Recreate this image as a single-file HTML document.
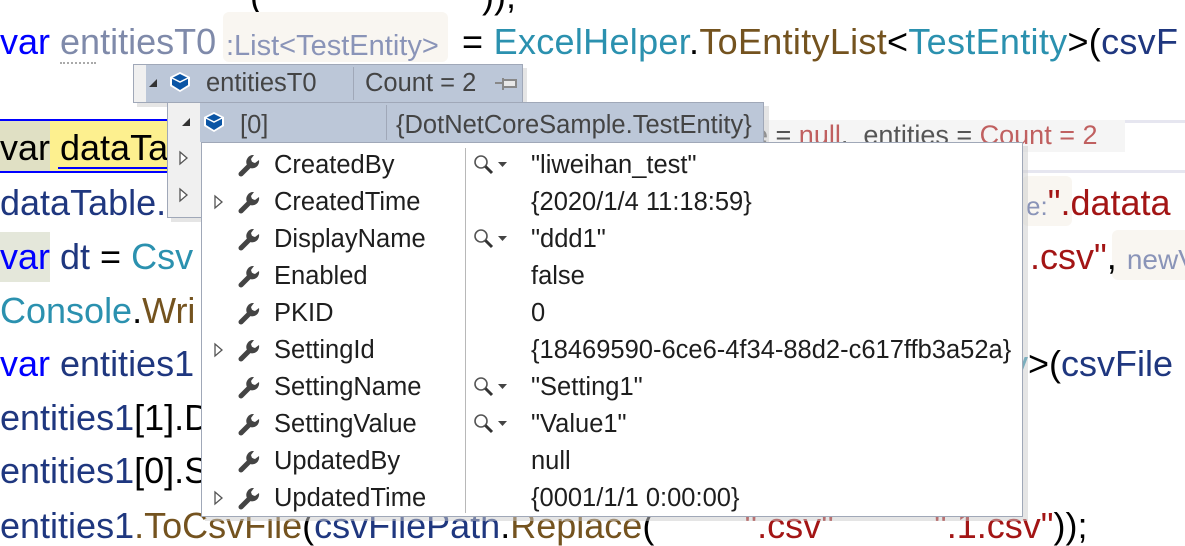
<!DOCTYPE html>
<html><head><meta charset="utf-8"><style>
*{margin:0;padding:0;box-sizing:border-box}
body{width:1185px;height:522px;overflow:hidden;background:#fff;position:relative;font-family:"Liberation Sans",sans-serif}
.l{position:absolute;left:0;font-size:36px;line-height:40px;white-space:pre;color:#1f377f}
.k{color:#0000ff}.t{color:#2b91af}.m{color:#74531f}.s{color:#a31515}.p{color:#000}.h{color:#8a94b8}
.abs{position:absolute}
.tt{position:absolute;font-size:25.5px;line-height:37px;white-space:pre;color:#1e1e1e}
.hd{color:#444}
</style></head><body>
<div class="l" style="top:-24px;left:250px"><span class="p">(                      ));</span></div>
<div class="abs" style="left:223px;top:12px;width:225px;height:50px;background:#f9f6f1;border-radius:6px"></div>
<div class="l" style="top:22px"><span class="k">var</span> <span style="color:#7f8aaa">entitiesT0</span></div>
<div class="l h" style="top:26px;left:226px;font-size:29px">:List&lt;TestEntity&gt;</div>
<div class="l" style="top:22px;left:462px;letter-spacing:0.3px"><span class="p">=</span> <span class="t">ExcelHelper</span><span class="p">.</span><span class="m">ToEntityList</span><span class="p">&lt;</span><span class="t">TestEntity</span><span class="p">&gt;(</span>csvF</div>
<div class="abs" style="left:60px;top:62px;width:36px;border-top:2px dotted #aaa"></div>
<div class="abs" style="left:0;top:120px;width:50px;height:52px;background:#e0e0c4"></div>
<div class="abs" style="left:50px;top:120px;width:150px;height:52px;background:#fdf08f"></div>
<div class="abs" style="left:0;top:119px;width:200px;border-top:2px solid #00f"></div>
<div class="abs" style="left:0;top:171px;width:200px;border-top:2px solid #00f"></div>
<div class="abs" style="left:58px;top:167px;width:142px;border-top:2px solid #00f"></div>
<div class="l" style="top:128px;color:#000">var dataTable</div>
<div class="abs" style="left:745px;top:120px;width:380px;height:32px;background:#f5f5f5"></div>
<div class="abs" style="left:1125px;top:120px;width:60px;border-top:3px solid #e6e6f0"></div>
<div class="abs" style="left:1022px;top:170px;width:163px;border-top:3px solid #e6e6f0"></div>
<div class="l" style="top:115px;left:753px;font-size:27px;color:#555">e = <span style="color:#c06060">null</span>,  entities = <span style="color:#c06060">Count = 2</span></div>
<div class="l" style="top:183px">dataTable.</div>
<div class="abs" style="left:1022px;top:176px;width:50px;height:50px;background:#f9f6f1;border-radius:6px"></div>
<div class="l" style="top:183px;left:1026px"><span class="h" style="font-size:26px">e:</span><span class="s">".datata</span></div>
<div class="abs" style="left:0;top:232px;width:50px;height:50px;background:#e4e7da"></div>
<div class="l" style="top:237px"><span class="k">var</span> dt <span class="p">=</span> <span class="t">Csv</span></div>
<div class="abs" style="left:1112px;top:230px;width:80px;height:50px;background:#f9f6f1;border-radius:6px"></div>
<div class="l" style="top:237px;left:1030px"><span class="s">.csv"</span><span class="p">,</span> <span class="h" style="font-size:28px">newV</span></div>
<div class="l" style="top:291px"><span class="t">Console</span><span class="p">.</span><span class="m">Wri</span></div>
<div class="l" style="top:344px"><span class="k">var</span> entities1</div>
<div class="l" style="top:344px;left:1010px"><span class="t">y</span><span class="p">&gt;(</span>csvFile</div>
<div class="l" style="top:398px">entities1<span class="p">[1].D</span></div>
<div class="l" style="top:451px">entities1<span class="p">[0].S</span></div>
<div class="l" style="top:506px">entities1<span class="m">.ToCsvFile</span><span class="p">(</span>csvFilePath<span class="p">.</span><span class="m">Replace</span><span class="p">(</span>         <span class="s">".csv"</span>          <span class="s">".1.csv"</span><span class="p">));</span></div>

<!-- tooltip 1 -->
<div class="abs" style="left:137px;top:68px;width:390px;height:39px;background:#ccc;opacity:.5"></div>
<div class="abs" style="left:133px;top:64px;width:390px;height:39px;background:#f0f0f0;border:1px solid #a0a8b8"></div>
<div class="abs" style="left:146px;top:65px;width:376px;height:37px;background:#bcc7d8"></div>
<div class="abs" style="left:149px;top:79px;width:0;height:0;border-left:8px solid transparent;border-bottom:8px solid #333"></div>
<svg class="abs" style="left:168px;top:70px" width="24" height="24" viewBox="0 0 24 24"><path d="M12 2 L22 7 L22 16 L12 22 L2 16 L2 7 Z" fill="#fff"/><path d="M12 4 L20 8 L20 15 L12 20 L4 15 L4 8 Z" fill="#0a55a5"/><path d="M4 8 L12 12 L20 8" stroke="#fff" stroke-width="1.5" fill="none"/></svg>
<div class="tt hd" style="left:206px;top:65px">entitiesT0</div>
<div class="abs" style="left:353px;top:67px;height:33px;border-left:1px solid #a0a8b8"></div>
<div class="tt hd" style="left:365px;top:65px">Count = 2</div>
<svg class="abs" style="left:494px;top:74px" width="24" height="20"><path d="M1 9h8M9 4v12M9 6h13v7H9" stroke="#888" stroke-width="2" fill="#e8e8e8"/></svg>

<!-- tooltip 2 -->
<div class="abs" style="left:171px;top:106px;width:598px;height:116px;background:#ccc;opacity:.5"></div>
<div class="abs" style="left:167px;top:102px;width:597px;height:116px;background:#f0f0f0;border:1px solid #a0a8b8"></div>
<div class="abs" style="left:200px;top:103px;width:563px;height:39px;background:#bcc7d8"></div>
<div class="abs" style="left:182px;top:118px;width:0;height:0;border-left:8px solid transparent;border-bottom:8px solid #333"></div>
<svg class="abs" style="left:178px;top:150px" width="14" height="60"><path d="M2 2 L9 8 L2 14Z M2 39 L9 45 L2 51Z" fill="#fff" stroke="#555" stroke-width="1.3"/></svg>
<svg class="abs" style="left:202px;top:110px" width="24" height="24" viewBox="0 0 24 24"><path d="M12 2 L22 7 L22 16 L12 22 L2 16 L2 7 Z" fill="#fff"/><path d="M12 4 L20 8 L20 15 L12 20 L4 15 L4 8 Z" fill="#0a55a5"/><path d="M4 8 L12 12 L20 8" stroke="#fff" stroke-width="1.5" fill="none"/></svg>
<div class="tt hd" style="left:240px;top:107px">[0]</div>
<div class="abs" style="left:386px;top:105px;height:35px;border-left:1px solid #a0a8b8"></div>
<div class="tt hd" style="left:396px;top:107px">{DotNetCoreSample.TestEntity}</div>

<!-- tooltip 3 -->
<div class="abs" style="left:205px;top:146px;width:823px;height:375px;background:#ccc;opacity:.5"></div>
<div class="abs" style="left:201px;top:142px;width:822px;height:375px;background:#fff;border:1px solid #a0a8b8"></div>
<div class="abs" style="left:465px;top:148px;height:365px;border-left:1px solid #b8b8b8"></div>
<svg class="abs" style="left:0;top:0" width="1185" height="522">
<defs>
<g id="w"><path d="M4 21 L14 11" stroke="#444" stroke-width="5" stroke-linecap="round"/><path d="M10 12 A7 7 0 0 1 17 2 L14 6 L15 9 L18 10 L22 7 A7 7 0 0 1 13 15 Z" fill="#444"/></g>
<g id="q"><circle cx="8" cy="8" r="6" stroke="#555" stroke-width="1.6" fill="#fff"/><path d="M12.5 12.5 L19 19" stroke="#333" stroke-width="3"/><path d="M25 8 h9 l-4.5 5z" fill="#444"/></g>
<g id="ar"><path d="M0 0 L7 6 L0 12Z" fill="#fff" stroke="#555" stroke-width="1.3"/></g>
</defs>
<use href="#w" x="237" y="153"/><use href="#w" x="237" y="190"/><use href="#w" x="237" y="227"/><use href="#w" x="237" y="264"/><use href="#w" x="237" y="301"/><use href="#w" x="237" y="338"/><use href="#w" x="237" y="375"/><use href="#w" x="237" y="412"/><use href="#w" x="237" y="449"/><use href="#w" x="237" y="486"/>
<use href="#q" x="473" y="154"/><use href="#q" x="473" y="228"/><use href="#q" x="473" y="376"/><use href="#q" x="473" y="413"/>
<use href="#ar" x="215" y="196"/><use href="#ar" x="215" y="344"/><use href="#ar" x="215" y="492"/>
</svg>
<div class="tt" style="left:274px;top:147px">CreatedBy</div><div class="tt" style="left:531px;top:147px">"liweihan_test"</div>
<div class="tt" style="left:274px;top:184px">CreatedTime</div><div class="tt" style="left:531px;top:184px">{2020/1/4 11:18:59}</div>
<div class="tt" style="left:274px;top:221px">DisplayName</div><div class="tt" style="left:531px;top:221px">"ddd1"</div>
<div class="tt" style="left:274px;top:258px">Enabled</div><div class="tt" style="left:531px;top:258px">false</div>
<div class="tt" style="left:274px;top:295px">PKID</div><div class="tt" style="left:531px;top:295px">0</div>
<div class="tt" style="left:274px;top:332px">SettingId</div><div class="tt" style="left:531px;top:332px">{18469590-6ce6-4f34-88d2-c617ffb3a52a}</div>
<div class="tt" style="left:274px;top:369px">SettingName</div><div class="tt" style="left:531px;top:369px">"Setting1"</div>
<div class="tt" style="left:274px;top:406px">SettingValue</div><div class="tt" style="left:531px;top:406px">"Value1"</div>
<div class="tt" style="left:274px;top:443px">UpdatedBy</div><div class="tt" style="left:531px;top:443px">null</div>
<div class="tt" style="left:274px;top:480px">UpdatedTime</div><div class="tt" style="left:531px;top:480px">{0001/1/1 0:00:00}</div>
</body></html>
